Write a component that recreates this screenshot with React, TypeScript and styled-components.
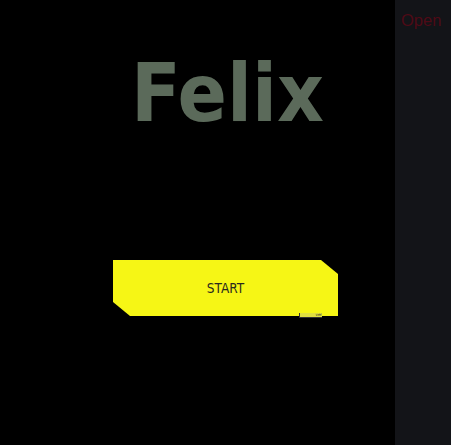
import React from "react";
import styled, { createGlobalStyle } from "styled-components";

const Global = createGlobalStyle`
  html, body { margin: 0; padding: 0; background: #000; }
  body { font-family: "DejaVu Sans", sans-serif; }
`;

const Shell = styled.div`
  display: flex;
  width: 451px;
  height: 445px;
  overflow: hidden;
`;

const Main = styled.main`
  flex: 1;
  background: #000;
  display: flex;
  flex-direction: column;
  align-items: center;
  padding-left: 56px;
  padding-top: 43px;
  box-sizing: border-box;
`;

const Title = styled.h1`
  margin: 0;
  font-family: "DejaVu Sans Condensed", "DejaVu Sans", sans-serif;
  font-stretch: condensed;
  font-weight: 700;
  font-size: 81px;
  line-height: 100px;
  color: #5b6a5a;
  transform: translateX(2px);
`;

const ButtonWrap = styled.div`
  position: relative;
  margin-top: 117px;
`;

const StartButton = styled.button`
  display: flex;
  align-items: center;
  justify-content: center;
  width: 225px;
  height: 56px;
  border: none;
  padding: 0 0 0 0;
  background: #f6f615;
  color: #2a2a1e;
  font-family: "DejaVu Sans Condensed", "DejaVu Sans", sans-serif;
  font-stretch: condensed;
  font-weight: 500;
  font-size: 13.5px;
  clip-path: polygon(0 0, 208px 0, 100% 14px, 100% 100%, 17px 100%, 0 42px);
  cursor: pointer;
`;

const Version = styled.span`
  position: absolute;
  right: 16px;
  bottom: -2px;
  width: 22px;
  height: 4px;
  font-family: "DejaVu Sans", sans-serif;
  font-size: 4px;
  line-height: 4px;
  color: #2a2a20;
  background: #e0e040;
  border-left: 1px solid #333;
  border-bottom: 1px solid #333;
  overflow: hidden;
  text-align: right;
`;

const Sidebar = styled.aside`
  width: 56px;
  background: #131418;
  display: flex;
  flex-direction: column;
  align-items: flex-start;
  padding: 11px 0 0 6px;
  box-sizing: border-box;
`;

const OpenLink = styled.span`
  font-family: "Liberation Sans", sans-serif;
  font-size: 16.5px;
  color: #4e0a16;
`;

export default function App() {
  return (
    <>
      <Global />
      <Shell>
        <Main>
          <Title>Felix</Title>
          <ButtonWrap>
            <StartButton>START</StartButton>
            <Version>ver</Version>
          </ButtonWrap>
        </Main>
        <Sidebar>
          <OpenLink>Open</OpenLink>
        </Sidebar>
      </Shell>
    </>
  );
}
